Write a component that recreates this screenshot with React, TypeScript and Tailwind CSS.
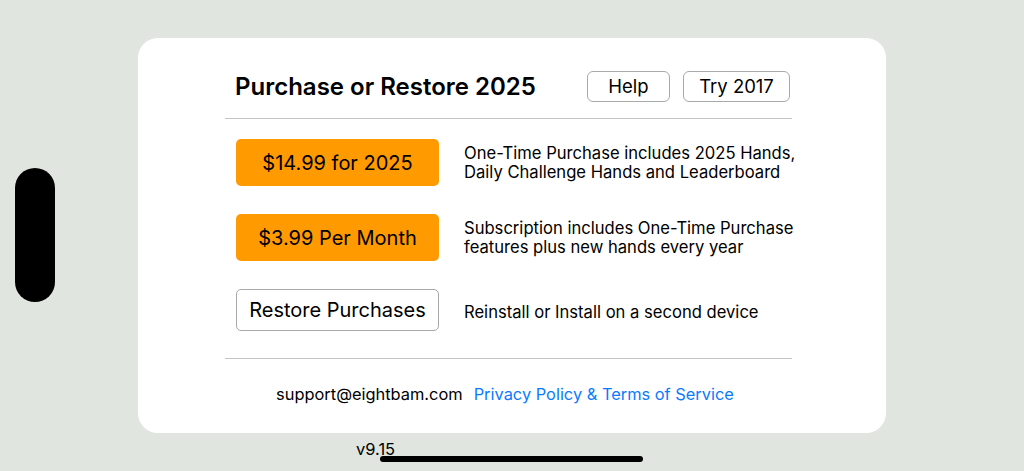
import React from "react";

export default function App() {
  const font = { fontFamily: "Inter, 'Noto Sans', sans-serif" };
  return (
    <div
      className="relative w-[1024px] h-[471px] overflow-hidden bg-[#e0e5df] flex items-start text-black"
      style={font}
    >
      <div className="ml-[15px] mt-[168px] w-[40px] h-[134px] rounded-full bg-black shrink-0" />
      <div className="ml-[83px] flex flex-col">
        <div className="mt-[38px] w-[748px] h-[395px] rounded-[20px] bg-white flex flex-col pl-[87px] pt-[33px]">
          <div className="w-[567px] flex flex-col">
            <div className="flex items-center h-[31px]">
              <div className="ml-[10px] text-[24px] font-semibold whitespace-nowrap">
                Purchase or Restore 2025
              </div>
              <div className="ml-auto mr-[2px] flex gap-[13px]">
                <button className="w-[83px] h-[31px] rounded-[6px] border border-[#a9a9a9] text-[18.5px] leading-none">
                  Help
                </button>
                <button className="w-[107px] h-[31px] rounded-[6px] border border-[#a9a9a9] text-[18.5px] leading-none">
                  Try 2017
                </button>
              </div>
            </div>
            <div className="mt-[16px] h-px bg-[#c4c4c4]" />
            <div className="mt-[20px] flex items-center">
              <button className="ml-[11px] w-[203px] h-[47px] rounded-[5px] bg-[#ff9a00] text-[20px] leading-none shrink-0">
                $14.99 for 2025
              </button>
              <div className="ml-[25px] text-[16.6px] leading-[19px] whitespace-nowrap">
                One-Time Purchase includes 2025 Hands,
                <br />
                Daily Challenge Hands and Leaderboard
              </div>
            </div>
            <div className="mt-[28px] flex items-center">
              <button className="ml-[11px] w-[203px] h-[47px] rounded-[5px] bg-[#ff9a00] text-[20px] leading-none shrink-0">
                $3.99 Per Month
              </button>
              <div className="ml-[25px] text-[16.6px] leading-[19px] whitespace-nowrap">
                Subscription includes One-Time Purchase
                <br />
                features plus new hands every year
              </div>
            </div>
            <div className="mt-[28px] flex items-center">
              <button className="ml-[11px] w-[203px] h-[42px] rounded-[5px] border border-[#a9a9a9] bg-white text-[20px] leading-none shrink-0">
                Restore Purchases
              </button>
              <div className="ml-[25px] mt-[5px] text-[16.6px] leading-[19px] whitespace-nowrap">
                Reinstall or Install on a second device
              </div>
            </div>
            <div className="mt-[27px] h-px bg-[#c4c4c4]" />
            <div className="mt-[25px] flex justify-center gap-[11px] text-[16.4px] leading-[20px] pr-[7px] whitespace-nowrap">
              <span>support@eightbam.com</span>
              <span className="text-[#0a7aff]">Privacy Policy &amp; Terms of Service</span>
            </div>
          </div>
        </div>
        <div className="ml-[218px] mt-[6px] text-[16.5px] leading-[20px]">v9.15</div>
      </div>
      <div className="absolute left-[380px] top-[456px] w-[263px] h-[6px] rounded-full bg-black" />
    </div>
  );
}
